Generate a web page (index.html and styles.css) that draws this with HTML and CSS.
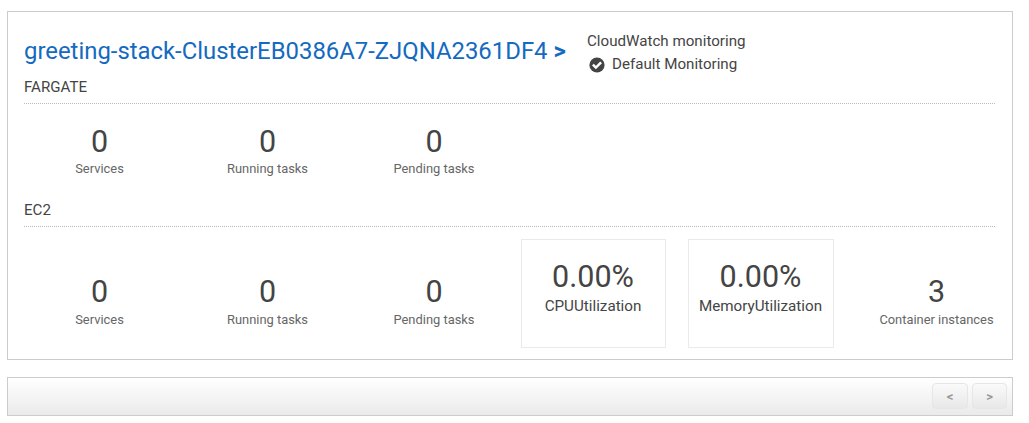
FILE: index.html
```html
<!DOCTYPE html>
<html lang="en">
<head>
<meta charset="utf-8">
<title>Clusters</title>
<link rel="stylesheet" href="styles.css">
</head>
<body>
<section class="cluster">
  <header class="head">
    <a class="name">greeting-stack-ClusterEB0386A7-ZJQNA2361DF4 <b>&gt;</b></a>
    <div class="monitoring">
      <div>CloudWatch monitoring</div>
      <div class="status"><svg class="check" viewBox="0 0 16 16"><circle cx="8" cy="8" r="7.6" fill="#444"/><path d="M3.9 7.6l3 3 5.2-5.2" fill="none" stroke="#fff" stroke-width="2.5"/></svg>Default Monitoring</div>
    </div>
  </header>
  <h2 class="type">FARGATE</h2>
  <div class="stats fargate">
    <div class="stat"><div class="num">0</div><div class="label">Services</div></div>
    <div class="stat"><div class="num">0</div><div class="label">Running tasks</div></div>
    <div class="stat"><div class="num">0</div><div class="label">Pending tasks</div></div>
  </div>
  <h2 class="type">EC2</h2>
  <div class="stats ec2">
    <div class="stat"><div class="num">0</div><div class="label">Services</div></div>
    <div class="stat"><div class="num">0</div><div class="label">Running tasks</div></div>
    <div class="stat"><div class="num">0</div><div class="label">Pending tasks</div></div>
    <div class="stat metric"><div class="num">0.00%</div><div class="label">CPUUtilization</div></div>
    <div class="stat metric memory"><div class="num">0.00%</div><div class="label">MemoryUtilization</div></div>
    <div class="stat last"><div class="num">3</div><div class="label">Container instances</div></div>
  </div>
</section>
<footer class="pager">
  <button class="page">&lt;</button>
  <button class="page next">&gt;</button>
</footer>
</body>
</html>
```
FILE: styles.css
```css
* { box-sizing: border-box; }
body { margin: 0; padding: 11px 16px 0 7px; background: #fff; color: #444; font-family: Roboto, sans-serif; }
.cluster { height: 349px; border: 1px solid #ccc; padding: 0 17px 0 16px; }
.head { display: flex; height: 64px; }
.name { width: 563px; padding-top: 23px; font-size: 23.88px; line-height: 32px; color: #146ac0; white-space: nowrap; }
.monitoring { padding-top: 18px; font-size: 15.15px; line-height: 23px; white-space: nowrap; }
.status { display: flex; align-items: center; gap: 7px; padding-left: 2px; }
.check { width: 16px; height: 16px; }
.type { margin: 0; height: 28px; border-bottom: 1px dotted #bbb; font-size: 15.1px; font-weight: 400; line-height: 22px; }
.stats { display: grid; grid-template-columns: 151px 163px 150px 145px 157px 150px; column-gap: 11px; }
.fargate { height: 95px; padding-top: 21px; }
.ec2 { height: 121px; padding-top: 12px; }
.stat { text-align: center; white-space: nowrap; }
.stat:nth-child(3) { padding-right: 2px; }
.num { font-size: 30.5px; line-height: 34px; }
.label { font-size: 12.9px; line-height: 20px; color: #666; }
.ec2 .stat { padding-top: 36px; }
.ec2 .label { padding-top: 1px; }
.ec2 .metric { height: 109px; padding-top: 20px; padding-right: 1px; border: 1px solid #eaeaea; }
.ec2 .memory { margin-left: 11px; }
.ec2 .last { padding-left: 33px; }
.ec2 .metric .label { padding-top: 0; font-size: 15.2px; line-height: 24px; color: #444; }
.pager { display: flex; justify-content: flex-end; gap: 4px; height: 39px; margin-top: 17px; padding: 5px 5px 0 0; border: 1px solid #ccc; background: linear-gradient(#fff, #eaeaea); }
.page { width: 36px; height: 26px; padding: 0; border: 1px solid #e6e6e6; border-radius: 4px; background: linear-gradient(#fafafa, #e8e8e8); color: #999; font: 700 13px Roboto, sans-serif; }
.next { width: 35px; }
```
